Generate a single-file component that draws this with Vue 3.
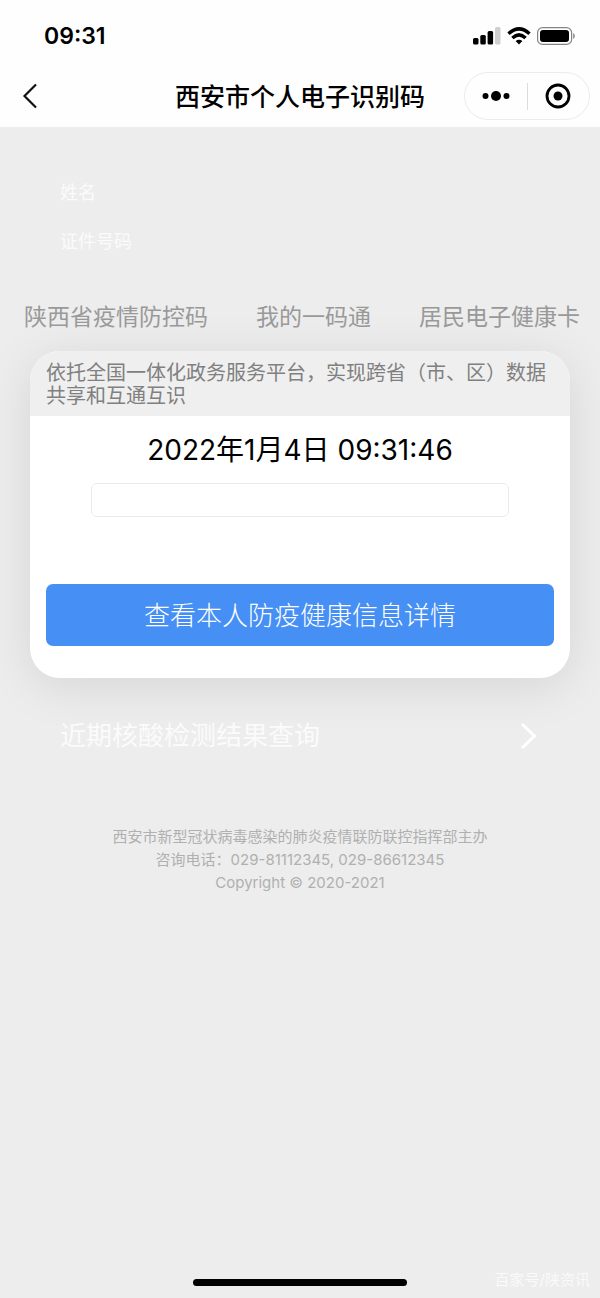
<script setup>
import { ref } from 'vue'

const tabs = ['陕西省疫情防控码', '我的一码通', '居民电子健康卡']
const activeTab = ref(0)
</script>

<template>
  <div class="page">
    <header class="top">
      <div class="status">
        <time class="clock">09:31</time>
        <div class="indicators">
          <svg width="28" height="18" viewBox="0 0 28 18" aria-hidden="true">
            <rect x="0" y="11" width="5.500" height="6.500" rx="1.500" />
            <rect x="7.300" y="8" width="5.500" height="9.500" rx="1.500" />
            <rect x="14.600" y="4" width="5.500" height="13.500" rx="1.500" />
            <rect x="22" y="0" width="5.500" height="17.500" rx="1.500" fill="#cfcfcf" />
          </svg>
          <svg width="24" height="18" viewBox="0 0 24 18" aria-hidden="true">
            <g fill="none" stroke="#000" stroke-width="3.400">
              <path d="M1.500 6.700Q12-3 22.500 6.700" />
              <path d="M5.400 11Q12 4.700 18.600 11" />
            </g>
            <path d="M8.600 14Q12 11.400 15.400 14L12 17.600Z" />
          </svg>
          <svg width="38" height="18" viewBox="0 0 38 18" aria-hidden="true">
            <rect x=".6" y=".6" width="34" height="16.800" rx="5" fill="none" stroke="#858585" stroke-width="1.200" />
            <rect x="3" y="3" width="29" height="12" rx="3" />
            <path d="M36 6q2 1 2 3t-2 3z" fill="#999" />
          </svg>
        </div>
      </div>
      <nav class="nav">
        <button class="back" type="button" aria-label="返回">
          <svg width="16" height="26" viewBox="0 0 16 26" aria-hidden="true">
            <path d="M14 1.500 2.500 13 14 24.500" fill="none" stroke="#111" stroke-width="2.200" />
          </svg>
        </button>
        <h1 class="title">西安市个人电子识别码</h1>
        <div class="capsule">
          <button type="button" aria-label="更多">
            <svg width="28" height="12" viewBox="0 0 28 12" aria-hidden="true">
              <circle cx="3.500" cy="6" r="3" /><circle cx="14" cy="6" r="5" /><circle cx="24.500" cy="6" r="3" />
            </svg>
          </button>
          <span class="divider"></span>
          <button type="button" aria-label="关闭">
            <svg width="26" height="26" viewBox="0 0 26 26" aria-hidden="true">
              <circle cx="13" cy="13" r="11" fill="none" stroke="#000" stroke-width="2.800" />
              <circle cx="13" cy="13" r="4.500" />
            </svg>
          </button>
        </div>
      </nav>
    </header>

    <main class="main">
      <dl class="person">
        <dt>姓名</dt>
        <dt>证件号码</dt>
      </dl>

      <div class="tabs">
        <button
          v-for="(tab, i) in tabs"
          :key="tab"
          type="button"
          :aria-pressed="i === activeTab"
          @click="activeTab = i"
        >{{ tab }}</button>
      </div>

      <section class="card">
        <p class="notice">依托全国一体化政务服务平台，实现跨省（市、区）数据共享和互通互识</p>
        <div class="body">
          <time class="date">2022年1月4日 09:31:46</time>
          <input class="field" type="text" aria-label="识别码信息" readonly />
          <button class="detail" type="button">查看本人防疫健康信息详情</button>
        </div>
      </section>

      <a class="query" href="#">
        <span>近期核酸检测结果查询</span>
        <svg width="18" height="28" viewBox="0 0 18 28" aria-hidden="true">
          <path d="M2 2 14.500 14 2 26" fill="none" stroke="#fff" stroke-width="3" />
        </svg>
      </a>

      <footer class="footer">
        <p>西安市新型冠状病毒感染的肺炎疫情联防联控指挥部主办</p>
        <p>咨询电话：029-81112345, 029-86612345</p>
        <p>Copyright © 2020-2021</p>
      </footer>
    </main>

    <div class="home"></div>
    <span class="watermark">百家号/陕资讯</span>
  </div>
</template>

<style>
body {
  margin: 0;
  background: #ededed;
}
</style>

<style scoped>
.page {
  position: relative;
  display: flex;
  flex-direction: column;
  min-height: 100vh;
  overflow: hidden;
  background: #ededed;
  color: #000;
  font-family: Inter, "Noto Sans CJK SC", sans-serif;
}

button {
  padding: 0;
  border: 0;
  background: none;
  color: inherit;
  font: inherit;
  cursor: pointer;
}

svg {
  display: block;
}

.top {
  background: #fefefe;
}

.status {
  display: flex;
  align-items: center;
  justify-content: space-between;
  height: 72px;
  padding: 0 25px 0 44px;
}

.clock {
  font-size: 23px;
  font-weight: 600;
}

.indicators {
  display: flex;
  gap: 6px;
}

.nav {
  display: grid;
  grid-template-columns: 1fr auto 1fr;
  align-items: center;
  height: 48px;
  padding: 0 10px 7px;
}

.back {
  justify-self: start;
  padding-left: 12px;
}

.title {
  margin: 0;
  padding-top: 2px;
  font-size: 25px;
  line-height: 36px;
  font-weight: 500;
}

.capsule {
  display: flex;
  align-items: center;
  justify-self: end;
  box-sizing: border-box;
  width: 126px;
  height: 48px;
  border: 1px solid #ececec;
  border-radius: 24px;
}

.capsule button {
  display: flex;
  flex: 1;
  justify-content: center;
}

.divider {
  width: 1px;
  height: 27px;
  background: #dcdcdc;
}

.main {
  flex: 1;
}

.person {
  display: grid;
  gap: 23px;
  margin: 0;
  padding: 53px 60px 0;
  color: #fbfbfb;
  font-size: 18px;
  line-height: 26px;
}

.tabs {
  display: flex;
  justify-content: space-between;
  padding: 45px 20px 0 24px;
  color: #999;
  font-size: 23px;
  line-height: 34px;
  white-space: nowrap;
}

.card {
  margin: 17px 30px 0;
  overflow: hidden;
  border-radius: 30px;
  background: #fff;
  box-shadow: 0 8px 50px rgba(0, 0, 0, 0.1);
}

.notice {
  margin: 0;
  padding: 11px 16px 8px;
  background: #efefef;
  color: #808080;
  font-size: 20px;
  line-height: 23px;
}

.body {
  display: flex;
  flex-direction: column;
  align-items: center;
  padding: 14px 16px 32px;
}

.date {
  font-size: 28px;
  line-height: 40px;
}

.field {
  box-sizing: border-box;
  width: calc(100% - 90px);
  height: 34px;
  margin-top: 13px;
  border: 1px solid #ebebeb;
  border-radius: 6px;
  background: #fff;
  outline: none;
}

.detail {
  width: 100%;
  height: 62px;
  margin-top: 67px;
  padding-bottom: 4px;
  border-radius: 7px;
  background: #468ff5;
  color: #fff;
  font-size: 26px;
  font-weight: 300;
}

.query {
  display: flex;
  align-items: center;
  justify-content: space-between;
  margin: 38px 62px 0 60px;
  color: #fbfbfb;
  font-size: 26px;
  line-height: 40px;
  text-decoration: none;
}

.footer {
  margin-top: 69px;
  color: #b0b0b0;
  font-size: 15px;
  line-height: 23px;
  text-align: center;
}

.footer p {
  margin: 0;
}

.home {
  width: 214px;
  height: 7px;
  margin: 0 auto 12px;
  border-radius: 4px;
  background: #000;
}

.watermark {
  position: absolute;
  right: 10px;
  bottom: 7px;
  color: #fafafa;
  font-size: 15px;
  line-height: 22px;
}
</style>
